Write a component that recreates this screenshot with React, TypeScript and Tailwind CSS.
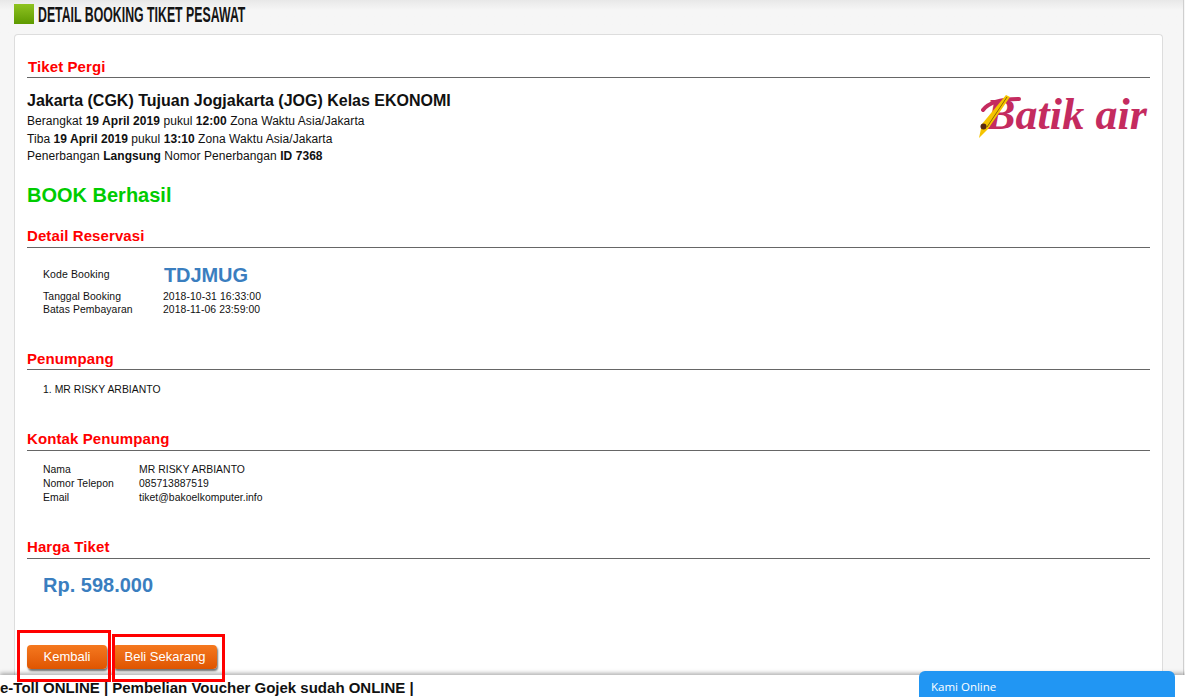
import type { ReactNode } from "react";

function SectionTitle({ children, className }: { children: ReactNode; className: string }) {
  return (
    <div className={`border-b border-[#666] text-[15px] leading-[17px] font-bold tracking-[0.1px] text-[#f00] ${className}`}>
      {children}
    </div>
  );
}

function InfoRow({ label, value }: { label: string; value: string }) {
  return (
    <div className="flex h-[14px] items-center text-[10.4px] leading-[14px] tracking-[0.04px] text-[#111]">
      <span className="w-[96px]">{label}</span>
      <span>{value}</span>
    </div>
  );
}

function BatikLogo() {
  return (
    <div className="relative h-[48px] w-[172px] shrink-0">
      <svg className="absolute top-0 left-0" width="60" height="48" viewBox="0 0 60 48">
        <path d="M8 18 C14 10 26 7 44 7" stroke="#c42b5f" strokeWidth="4" fill="none" strokeLinecap="round" />
      </svg>
      <span className="absolute top-[-1px] left-[11px] font-['Liberation_Serif',serif] text-[44px] leading-[48px] font-bold tracking-[0.1px] whitespace-nowrap text-[#c42b5f] italic">
        Batik air
      </span>
      <svg className="absolute top-0 left-0" width="60" height="48" viewBox="0 0 60 48">
        <path d="M4 46 L7 32 L31 3 L35 5 L13 37 Z" fill="#f5c400" />
        <path d="M32 5 L12 35" stroke="#8a6a00" strokeWidth="1" fill="none" />
        <circle cx="8.5" cy="34.5" r="3" fill="#5a2a10" />
      </svg>
    </div>
  );
}

function OrangeButton({ children, width }: { children: ReactNode; width: string }) {
  return (
    <button className={`h-[24px] rounded-[4px] bg-gradient-to-b from-[#f5781e] to-[#df5500] text-center text-[13px] leading-[24px] text-white shadow-[1px_2px_2px_rgba(0,0,0,0.55)] ${width}`}>
      {children}
    </button>
  );
}

export default function App() {
  return (
    <div className="relative flex h-[697px] w-[1185px] flex-col overflow-hidden bg-[#f6f6f6] font-['Liberation_Sans',Arial,sans-serif] text-[#111]">
      <div className="flex min-h-0 w-[1184px] flex-1 flex-col border-r border-r-[#cfcfcf]">
        <div className="flex h-[34px] shrink-0 items-start bg-gradient-to-b from-[#e8e8e8] to-[#f6f6f6] to-[30%] pt-[4px] pl-[14px]">
          <div className="h-[20px] w-[20px] bg-gradient-to-b from-[#8fc31f] to-[#5e9a00]" />
          <h1 className="ml-[4px] origin-left scale-x-[0.56] text-[22px] leading-[22px] font-bold whitespace-nowrap text-[#151515] uppercase">
            Detail Booking Tiket Pesawat
          </h1>
        </div>

        <div className="ml-[14px] min-h-0 w-[1149px] flex-1 rounded-t-[4px] border border-b-0 border-[#ddd] bg-white px-[12px] pt-[23px]">
          <SectionTitle className="h-[20px] pl-[1px]">Tiket Pergi</SectionTitle>

          <div className="mt-[14px] flex justify-between pr-[3px]">
            <div>
              <div className="text-[16px] leading-[18px] font-bold">
                Jakarta (CGK) Tujuan Jogjakarta (JOG) Kelas EKONOMI
              </div>
              <div className="mt-[3px] text-[12px] leading-[17.5px] tracking-[0.06px]">
                <div>
                  Berangkat <b>19 April 2019</b> pukul <b>12:00</b> Zona Waktu Asia/Jakarta
                </div>
                <div>
                  Tiba <b>19 April 2019</b> pukul <b>13:10</b> Zona Waktu Asia/Jakarta
                </div>
                <div>
                  Penerbangan <b>Langsung</b> Nomor Penerbangan <b>ID 7368</b>
                </div>
              </div>
            </div>
            <BatikLogo />
          </div>

          <div className="mt-[17px] text-[20px] leading-[24px] font-bold text-[#0c0]">BOOK Berhasil</div>

          <SectionTitle className="mt-[19px] h-[22px] pt-[1px]">Detail Reservasi</SectionTitle>
          <div className="mt-[14px] pl-[16px]">
            <div className="flex h-[26px] items-center text-[10.5px] tracking-[0.1px] text-[#111]">
              <span className="w-[121px]">Kode Booking</span>
              <span className="text-[20px] font-bold tracking-[-0.1px] text-[#3a7ebf]">TDJMUG</span>
            </div>
            <div className="mt-[3px] text-[10.4px] tracking-[0.08px]">
              <div className="flex h-[13px] items-center">
                <span className="w-[120px]">Tanggal Booking</span>
                <span>2018-10-31 16:33:00</span>
              </div>
              <div className="flex h-[13px] items-center">
                <span className="w-[120px]">Batas Pembayaran</span>
                <span>2018-11-06 23:59:00</span>
              </div>
            </div>
          </div>

          <SectionTitle className="mt-[33px] h-[20px]">Penumpang</SectionTitle>
          <div className="mt-[13px] pl-[16px] text-[10.4px] leading-[14px] tracking-[0.04px]">1. MR RISKY ARBIANTO</div>

          <SectionTitle className="mt-[33px] h-[21px]">Kontak Penumpang</SectionTitle>
          <div className="mt-[12px] pl-[16px]">
            <InfoRow label="Nama" value="MR RISKY ARBIANTO" />
            <InfoRow label="Nomor Telepon" value="085713887519" />
            <InfoRow label="Email" value="tiket@bakoelkomputer.info" />
          </div>

          <SectionTitle className="mt-[33px] h-[21px]">Harga Tiket</SectionTitle>
          <div className="mt-[14px] pl-[16px] text-[20px] leading-[24px] font-bold text-[#3a7ebf]">Rp. 598.000</div>

          <div className="mt-[48px] flex gap-[6px]">
            <OrangeButton width="w-[80px]">Kembali</OrangeButton>
            <OrangeButton width="w-[104px]">Beli Sekarang</OrangeButton>
          </div>
        </div>
      </div>

      <div className="z-10 h-[22px] shrink-0 overflow-hidden bg-white pt-[4px] shadow-[0_-2px_4px_rgba(0,0,0,0.3)]">
        <div className="text-[15px] leading-[18px] font-bold whitespace-nowrap text-[#111]">
          e-Toll ONLINE | Pembelian Voucher Gojek sudah ONLINE |
        </div>
      </div>

      <div className="absolute right-[10px] bottom-0 z-20 h-[26px] w-[256px] rounded-t-[6px] bg-[#2196f3] pt-[8px] pl-[12px] font-['Open_Sans',sans-serif] text-[11.5px] leading-[16px] text-white">
        Kami Online
      </div>

      <div className="absolute top-[630px] left-[17px] z-20 h-[52px] w-[94px] border-[3px] border-[#f00]" />
      <div className="absolute top-[634px] left-[112px] z-20 h-[48px] w-[113px] border-[3px] border-[#f00]" />
    </div>
  );
}
